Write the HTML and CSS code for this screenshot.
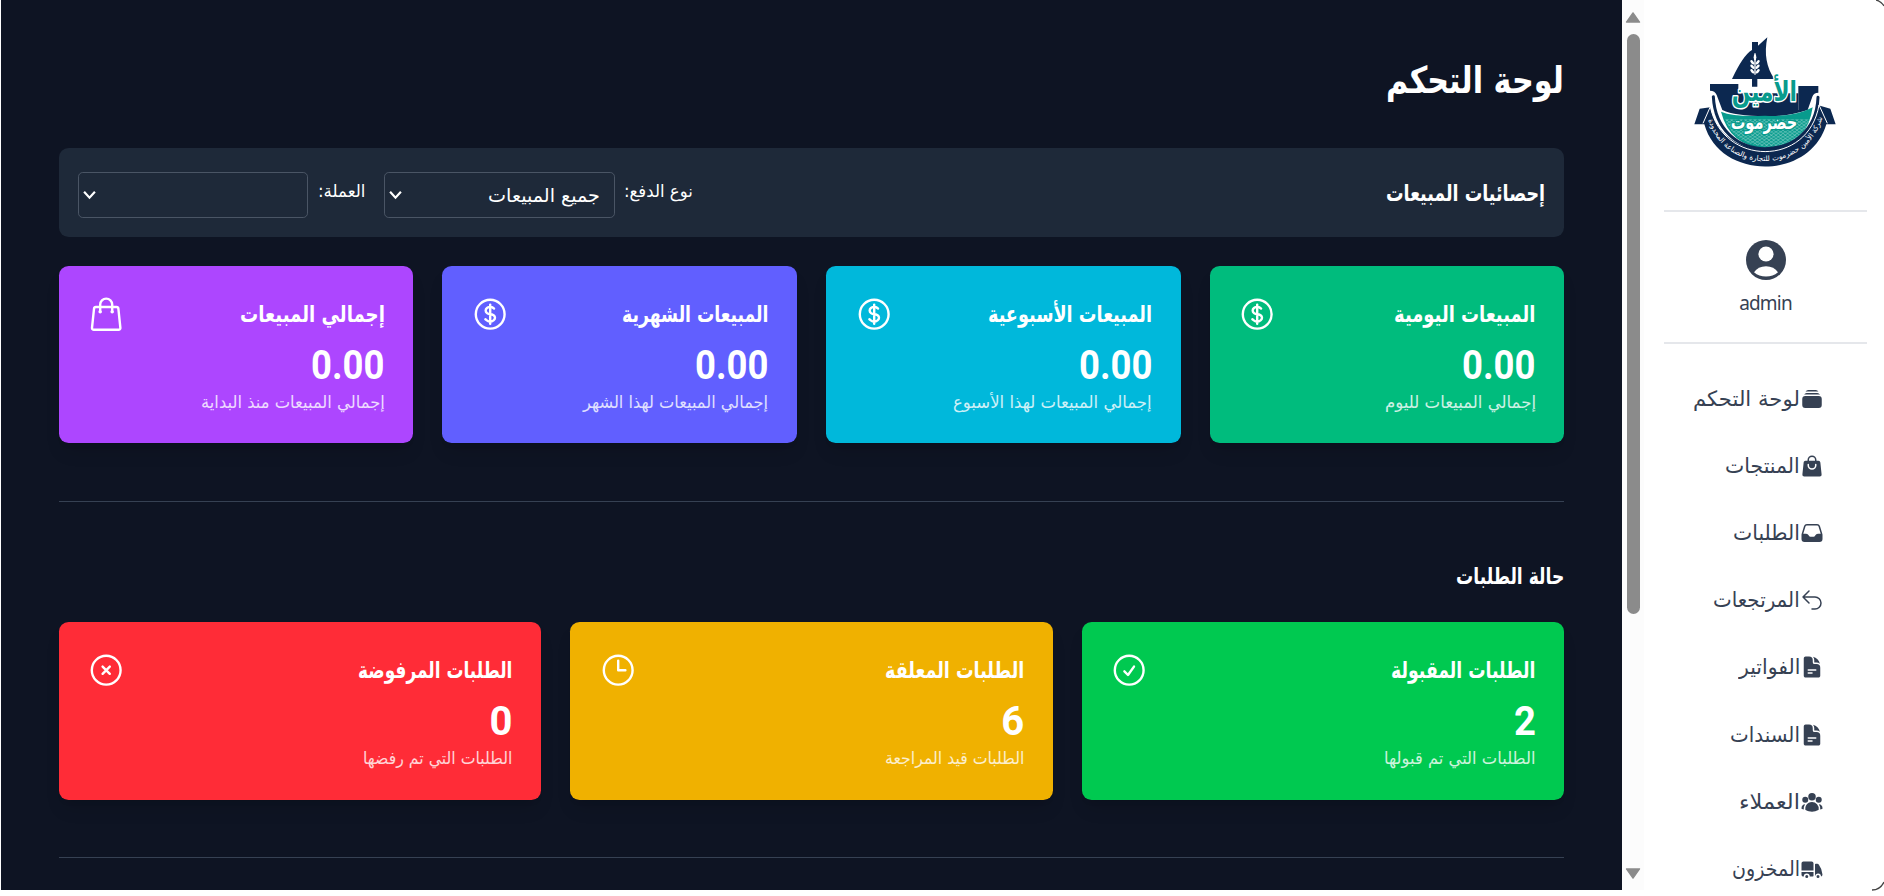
FILE: index.html
```html
<!DOCTYPE html>
<html lang="ar" dir="rtl">
<head>
<meta charset="utf-8">
<title>لوحة التحكم</title>
<link rel="stylesheet" href="styles.css">
</head>
<body>
<div class="app">
  <aside class="sidebar">
    <svg class="logo" viewBox="0 0 480 435" direction="rtl">
      <defs>
        <pattern id="scales" width="14" height="10" patternUnits="userSpaceOnUse">
          <path d="M0 0Q7 10 14 0M-7 5Q0 15 7 5M7 5Q14 15 21 5" fill="none" stroke="#d5efeb" stroke-width="1.2"/>
        </pattern>
        <path id="ribbon" d="M68 262C112 438 368 438 414 256"/>
      </defs>
      <path fill="#0c2850" d="M247 22Q232 95 268 147H141Q174 76 201 60V36H219V47Z"/>
      <path fill="#0c2850" d="M201 147H217V170H201ZM75 162H160V240H340V168H400V188Q386 188 382 200L368 240Q300 262 240 258Q150 258 112 240L95 195Q90 182 75 182Z"/>
      <g fill="#fff">
        <path d="M208 70h4v64h-4z"/>
        <ellipse cx="210" cy="82" rx="4" ry="9"/>
        <g id="grain"><ellipse cx="202" cy="97" rx="4" ry="8" transform="rotate(-42 202 97)"/><ellipse cx="218" cy="97" rx="4" ry="8" transform="rotate(42 218 97)"/></g>
        <use href="#grain" y="13"/><use href="#grain" y="27"/>
      </g>
      <path fill="#089b8d" d="M108 245Q150 262 240 257Q330 262 383 232Q365 355 244 355Q135 350 108 245Z"/>
      <path fill="url(#scales)" d="M120 268H374Q350 350 244 350Q150 345 120 268Z"/>
      <path fill="none" stroke="#0c2850" stroke-width="9" stroke-linecap="round" d="M85 200C90 300 160 356 240 356S395 305 399 202"/>
      <path fill="#0c2850" d="M76 232L44 236L28 283H58C105 452 375 452 424 283H452L436 236L400 226C372 393 115 408 76 232Z"/>
      <path fill="none" stroke="#fff" stroke-width="3" d="M54 280L76 230C112 408 370 413 402 225L427 280"/>
      <path fill="#0c2850" d="M155 190H340V240H155Z"/>
      <text class="logo-top" x="238" y="214" text-anchor="middle" textLength="196" lengthAdjust="spacingAndGlyphs">الأمين</text>
      <text class="logo-mid" x="237" y="296" text-anchor="middle" textLength="200" lengthAdjust="spacingAndGlyphs">حضرموت</text>
      <text class="logo-ring"><textPath href="#ribbon" startOffset="50%" text-anchor="middle">شركة الأمين حضرموت للتجارة والصناعة المحدودة</textPath></text>
    </svg>
    <div class="user">
      <svg class="avatar" viewBox="0 0 40 40"><circle cx="20" cy="20" r="20" fill="#364153"/><circle cx="20" cy="14" r="7.6" fill="#fff"/><path fill="#fff" d="M8 32.2Q12 26.2 20 26.2T32 32.2Q27 36.6 20 36.6T8 32.2Z"/></svg>
      <span class="user-name">admin</span>
    </div>
    <nav class="menu">
      <a class="item"><svg class="ico" viewBox="0 0 24 24"><path d="M5.566 4.657A4.505 4.505 0 0 1 6.75 4.5h10.5c.41 0 .806.055 1.183.157A3 3 0 0 0 15.75 3h-7.5a3 3 0 0 0-2.684 1.657ZM2.25 12a3 3 0 0 1 3-3h13.5a3 3 0 0 1 3 3v6a3 3 0 0 1-3 3H5.25a3 3 0 0 1-3-3v-6ZM5.25 7.5c-.41 0-.806.055-1.184.157A3 3 0 0 1 6.75 6h10.5a3 3 0 0 1 2.683 1.657A4.505 4.505 0 0 0 18.75 7.5H5.25Z"/></svg><span data-width="107">لوحة التحكم</span></a>
      <a class="item"><svg class="ico" viewBox="0 0 24 24"><path fill-rule="evenodd" d="M7.5 6v.75H5.513c-.96 0-1.764.724-1.865 1.679l-1.263 12A1.875 1.875 0 0 0 4.25 22.5h15.5a1.875 1.875 0 0 0 1.865-2.071l-1.263-12a1.875 1.875 0 0 0-1.865-1.679H16.5V6a4.5 4.5 0 1 0-9 0ZM12 3a3 3 0 0 0-3 3v.75h6V6a3 3 0 0 0-3-3Zm-3 8.25a3 3 0 1 0 6 0v-.75a.75.75 0 0 1 1.5 0v.75a4.5 4.5 0 1 1-9 0v-.75a.75.75 0 0 1 1.5 0v.75Z"/></svg><span data-width="75">المنتجات</span></a>
      <a class="item"><svg class="ico" viewBox="0 0 24 24"><path fill-rule="evenodd" d="M6.912 3a3 3 0 0 0-2.868 2.118l-2.411 7.838a3 3 0 0 0-.133.882V18a3 3 0 0 0 3 3h15a3 3 0 0 0 3-3v-4.162c0-.299-.045-.596-.133-.882l-2.412-7.838A3 3 0 0 0 17.088 3H6.912Zm13.823 9.75-2.213-7.191A1.5 1.5 0 0 0 17.088 4.5H6.912a1.5 1.5 0 0 0-1.434 1.059L3.265 12.75H6.11a3 3 0 0 1 2.684 1.658l.256.513a1.5 1.5 0 0 0 1.342.829h3.218a1.5 1.5 0 0 0 1.342-.83l.256-.512a3 3 0 0 1 2.684-1.658h2.844Z"/></svg><span data-width="67">الطلبات</span></a>
      <a class="item"><svg class="ico line" viewBox="0 0 24 24"><path d="M9 15 3 9m0 0 6-6M3 9h12a6 6 0 0 1 0 12h-3"/></svg><span data-width="87">المرتجعات</span></a>
      <a class="item"><svg class="ico" viewBox="0 0 24 24"><path id="doc" fill-rule="evenodd" d="M5.625 1.5c-1.036 0-1.875.84-1.875 1.875v17.25c0 1.035.84 1.875 1.875 1.875h12.75c1.035 0 1.875-.84 1.875-1.875V12.75A3.75 3.75 0 0 0 16.5 9h-1.875a1.875 1.875 0 0 1-1.875-1.875V5.25A3.75 3.75 0 0 0 9 1.5H5.625ZM7.5 15a.75.75 0 0 1 .75-.75h7.5a.75.75 0 0 1 0 1.5h-7.5A.75.75 0 0 1 7.5 15Zm.75 2.25a.75.75 0 0 0 0 1.5H12a.75.75 0 0 0 0-1.5H8.25ZM12.971 1.816A5.23 5.23 0 0 1 14.25 5.25v1.875c0 .207.168.375.375.375H16.5a5.23 5.23 0 0 1 3.434 1.279 9.768 9.768 0 0 0-6.963-6.963Z"/></svg><span data-width="61">الفواتير</span></a>
      <a class="item"><svg class="ico" viewBox="0 0 24 24"><use href="#doc"/></svg><span data-width="70">السندات</span></a>
      <a class="item"><svg class="ico" viewBox="0 0 24 24"><path d="M8.25 6.75a3.75 3.75 0 1 1 7.5 0 3.75 3.75 0 0 1-7.5 0ZM15.75 9.75a3 3 0 1 1 6 0 3 3 0 0 1-6 0ZM2.25 9.75a3 3 0 1 1 6 0 3 3 0 0 1-6 0ZM6.31 15.117A6.745 6.745 0 0 1 12 12a6.745 6.745 0 0 1 6.709 7.498.75.75 0 0 1-.372.568A12.696 12.696 0 0 1 12 21.75c-2.305 0-4.47-.612-6.337-1.684a.75.75 0 0 1-.372-.568 6.787 6.787 0 0 1 1.019-4.38ZM5.082 14.254a8.287 8.287 0 0 0-1.308 5.135 9.687 9.687 0 0 1-1.764-.44l-.115-.04a.563.563 0 0 1-.373-.487l-.01-.121a3.75 3.75 0 0 1 3.57-4.047ZM20.226 19.389a8.287 8.287 0 0 0-1.308-5.135 3.75 3.75 0 0 1 3.57 4.047l-.01.121a.563.563 0 0 1-.373.486l-.115.04c-.567.2-1.156.349-1.764.441Z"/></svg><span data-width="61">العملاء</span></a>
      <a class="item"><svg class="ico" viewBox="0 0 24 24"><path d="M3.375 4.5C2.339 4.5 1.5 5.34 1.5 6.375V13.5h12V6.375c0-1.036-.84-1.875-1.875-1.875h-8.25ZM13.5 15h-12v2.625c0 1.035.84 1.875 1.875 1.875h.375a3 3 0 1 1 6 0h3a.75.75 0 0 0 .75-.75V15ZM8.25 19.5a1.5 1.5 0 1 0-3 0 1.5 1.5 0 0 0 3 0ZM15.75 6.75a.75.75 0 0 0-.75.75v11.25c0 .087.015.17.042.248a3 3 0 0 1 5.958.464c.853-.175 1.522-.935 1.464-1.883a18.659 18.659 0 0 0-3.732-10.104 1.837 1.837 0 0 0-1.47-.725H15.75ZM19.5 19.5a1.5 1.5 0 1 0-3 0 1.5 1.5 0 0 0 3 0Z"/></svg><span data-width="68">المخزون</span></a>
    </nav>
  </aside>

  <div class="scrollbar">
    <svg class="arrow" viewBox="0 0 14 11"><path d="M7 1.5 12.7 9.5H1.3Z"/></svg>
    <div class="thumb"></div>
    <svg class="arrow" viewBox="0 0 14 11"><path d="M7 9.5 12.7 1.5H1.3Z"/></svg>
  </div>

  <main class="content">
    <h1 class="title"><span data-width="178">لوحة التحكم</span></h1>
    <section class="filters">
      <h2 class="heading"><span data-width="159">إحصائيات المبيعات</span></h2>
      <div class="fields">
        <div class="field"><label class="label"><span data-width="69">نوع الدفع:</span></label>
          <div class="select"><span data-width="112">جميع المبيعات</span><svg class="chevron" viewBox="0 0 12 9"><path d="M1 1.5 6 7 11 1.5"/></svg></div></div>
        <div class="field"><label class="label"><span data-width="47">العملة:</span></label>
          <div class="select"><span></span><svg class="chevron" viewBox="0 0 12 9"><path d="M1 1.5 6 7 11 1.5"/></svg></div></div>
      </div>
    </section>

    <section class="grid four">
      <article class="card emerald"><header class="card-head"><h3><span data-width="141">المبيعات اليومية</span></h3><svg class="stat" viewBox="0 0 24 24"><path id="dollar" d="M12 6v12m-3-2.818.879.659c1.171.879 3.07.879 4.242 0 1.172-.879 1.172-2.303 0-3.182C13.536 12.219 12.768 12 12 12c-.725 0-1.45-.22-2.003-.659-1.106-.879-1.106-2.303 0-3.182s2.9-.879 4.006 0l.415.33M21 12a9 9 0 1 1-18 0 9 9 0 0 1 18 0Z"/></svg></header><p class="value"><span data-width="73">0.00</span></p><p class="note"><span data-width="151">إجمالي المبيعات لليوم</span></p></article>
      <article class="card cyan"><header class="card-head"><h3><span data-width="164">المبيعات الأسبوعية</span></h3><svg class="stat" viewBox="0 0 24 24"><use href="#dollar"/></svg></header><p class="value"><span data-width="73">0.00</span></p><p class="note"><span data-width="199">إجمالي المبيعات لهذا الأسبوع</span></p></article>
      <article class="card indigo"><header class="card-head"><h3><span data-width="146">المبيعات الشهرية</span></h3><svg class="stat" viewBox="0 0 24 24"><use href="#dollar"/></svg></header><p class="value"><span data-width="73">0.00</span></p><p class="note"><span data-width="185">إجمالي المبيعات لهذا الشهر</span></p></article>
      <article class="card purple"><header class="card-head"><h3><span data-width="145">إجمالي المبيعات</span></h3><svg class="stat" viewBox="0 0 24 24"><path d="M15.75 10.5V6a3.75 3.75 0 1 0-7.5 0v4.5m11.356-1.993 1.263 12c.07.665-.45 1.243-1.119 1.243H4.25a1.125 1.125 0 0 1-1.12-1.243l1.264-12A1.125 1.125 0 0 1 5.513 7.5h12.974c.576 0 1.059.435 1.119 1.007ZM8.625 10.5a.375.375 0 1 1-.75 0 .375.375 0 0 1 .75 0Zm7.5 0a.375.375 0 1 1-.75 0 .375.375 0 0 1 .75 0Z"/></svg></header><p class="value"><span data-width="73">0.00</span></p><p class="note"><span data-width="184">إجمالي المبيعات منذ البداية</span></p></article>
    </section>

    <section class="orders">
      <h2 class="heading"><span data-width="108">حالة الطلبات</span></h2>
      <div class="grid three">
        <article class="card green"><header class="card-head"><h3><span data-width="144">الطلبات المقبولة</span></h3><svg class="stat" viewBox="0 0 24 24"><path d="M9 12.75 11.25 15 15 9.75M21 12a9 9 0 1 1-18 0 9 9 0 0 1 18 0Z"/></svg></header><p class="value"><span data-width="22">2</span></p><p class="note"><span data-width="151">الطلبات التي تم قبولها</span></p></article>
        <article class="card yellow"><header class="card-head"><h3><span data-width="139">الطلبات المعلقة</span></h3><svg class="stat" viewBox="0 0 24 24"><path d="M12 6v6h4.5m4.5 0a9 9 0 1 1-18 0 9 9 0 0 1 18 0Z"/></svg></header><p class="value"><span data-width="23">6</span></p><p class="note"><span data-width="139">الطلبات قيد المراجعة</span></p></article>
        <article class="card red"><header class="card-head"><h3><span data-width="154">الطلبات المرفوضة</span></h3><svg class="stat" viewBox="0 0 24 24"><path d="m9.75 9.75 4.5 4.5m0-4.5-4.5 4.5M21 12a9 9 0 1 1-18 0 9 9 0 0 1 18 0Z"/></svg></header><p class="value"><span data-width="23">0</span></p><p class="note"><span data-width="149">الطلبات التي تم رفضها</span></p></article>
      </div>
    </section>
    <hr class="rule">
  </main>
</div>
<svg class="corner top" viewBox="0 0 8 8"><path d="M0 0Q5 1 8 6"/></svg>
<svg class="corner bottom" viewBox="0 0 12 12"><path d="M0 10Q8 10 12 2"/></svg>
<script src="fit.js"></script>
</body>
</html>
```
FILE: styles.css
```css
* { box-sizing: border-box; margin: 0; padding: 0; }

body {
  height: 896px;
  overflow: hidden;
  background: #fff;
  font-family: "DejaVu Sans", "Noto Sans", sans-serif;
}

.app { display: flex; height: 890px; overflow: hidden; }

[data-width] { display: inline-block; white-space: nowrap; transform-origin: right center; }

/* sidebar */
.sidebar { flex: none; width: 240px; height: 890px; padding: 30px 17px 0 20px; background: #fff; overflow: hidden; }
.logo { display: block; width: 160px; height: 145px; margin: 0 22px 0 auto; }
.logo-top, .logo-mid { font-family: "DejaVu Sans", sans-serif; font-weight: 700; paint-order: stroke; stroke-linejoin: round; }
.logo-top { font-size: 84px; fill: #089b8d; stroke: #fff; stroke-width: 9px; }
.logo-mid { font-size: 60px; fill: #fff; stroke: #089b8d; stroke-width: 8px; }
.logo-ring { font-size: 22px; fill: #fff; }

.user {
  display: flex;
  flex-direction: column;
  align-items: center;
  height: 134px;
  margin-top: 35px;
  padding-top: 28px;
  border-top: 2px solid #e5e7eb;
  border-bottom: 2px solid #e5e7eb;
}
.avatar { width: 40px; height: 40px; }
.user-name { margin-top: 9px; font: 19px/28px "Noto Sans", sans-serif; color: #364153; letter-spacing: -0.8px; }

.menu { padding: 21px 43px 0 0; }
.item { display: flex; align-items: center; height: 67.2px; font-size: 21px; color: #364153; }
.ico { flex: none; width: 24px; height: 24px; fill: #364153; }
.ico.line { fill: none; stroke: #364153; stroke-width: 1.5; stroke-linecap: round; stroke-linejoin: round; }

/* scrollbar */
.scrollbar { flex: none; display: flex; flex-direction: column; align-items: center; width: 22px; padding: 11px 0 10px; background: #fcfcfc; }
.arrow { flex: none; width: 16px; height: 13px; fill: #8b8b8b; stroke: #8b8b8b; stroke-width: 1.2; stroke-linejoin: round; }
.thumb { width: 13px; height: 580px; margin: 10px 0 auto; border-radius: 7px; background: #8b8b8b; }

/* content */
.content { flex: 1; margin-left: 1px; padding: 57px 57.6px 0; background: #0e1423; color: #fff; overflow: hidden; }
.title { height: 48px; margin-bottom: 43px; font-size: 37px; line-height: 48px; }

.filters { display: flex; align-items: center; justify-content: space-between; height: 89px; padding: 0 19.2px; border-radius: 9.6px; background: #1e2939; }
.heading { font-size: 23px; line-height: 34px; }
.fields { display: flex; gap: 19px; align-items: center; padding-top: 5px; }
.field { display: flex; gap: 9.6px; }
.label { margin-top: 5px; font-size: 17px; line-height: 28px; white-space: nowrap; }
.select { display: flex; align-items: center; justify-content: space-between; width: 230.4px; height: 46px; padding: 0 14px 0 4px; border: 1px solid #4a5565; border-radius: 4.8px; font-size: 19px; }
.chevron { width: 13px; height: 10px; fill: none; stroke: #fff; stroke-width: 2; }

.grid { display: grid; gap: 28.8px; }
.four { grid-template-columns: repeat(4, 1fr); margin-top: 29px; }
.three { grid-template-columns: repeat(3, 1fr); margin-top: 28px; }

.card { height: 177px; padding: 28.8px; border-radius: 9.6px; box-shadow: 0 12px 18px -4px rgba(0, 0, 0, 0.12), 0 5px 7px -5px rgba(0, 0, 0, 0.12); }
.three .card { height: 178px; }
.card-head { display: flex; align-items: center; justify-content: space-between; height: 38.4px; }
.card-head h3 { font-size: 23px; line-height: 34px; }
.stat { width: 38.4px; height: 38.4px; fill: none; stroke: #fff; stroke-width: 1.5; stroke-linecap: round; stroke-linejoin: round; flex: none; }
.value { height: 48px; margin-top: 9px; font: 700 40px/48px Roboto, sans-serif; }
.note { font-size: 17px; line-height: 24px; opacity: 0.8; }

.emerald { background: #00bc7d; }
.cyan { background: #00b8db; }
.indigo { background: #615fff; }
.purple { background: #ad46ff; }
.green { background: #00c950; }
.yellow { background: #f0b100; }
.red { background: #ff2c37; }

.orders { margin-top: 58px; padding-top: 57px; border-top: 1px solid #364153; }
.orders .three { margin-top: 29px; }
.rule { margin-top: 57px; border: 0; border-top: 1px solid #364153; }

/* window frame corners */
.corner { position: absolute; right: 0; fill: none; stroke: #444; stroke-width: 1.3; }
.top { top: 0; width: 8px; height: 8px; }
.bottom { top: 880px; width: 12px; height: 12px; }
```
FILE: fit.js
```js
document.querySelectorAll('[data-width]').forEach(function (el) {
  var natural = el.offsetWidth;
  var width = Number(el.dataset.width);
  el.style.transform = 'scaleX(' + width / natural + ')';
  el.style.marginLeft = (width - natural) + 'px';
});
```
